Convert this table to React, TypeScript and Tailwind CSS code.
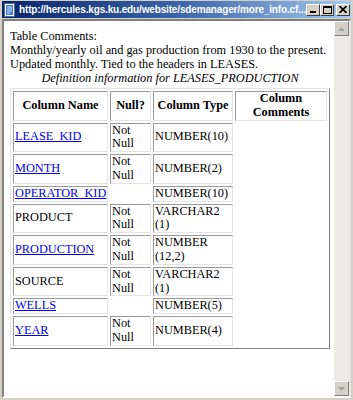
import React from "react";

const rows = [
  { name: "LEASE_KID", link: true, nul: ["Not", "Null"], type: ["NUMBER(10)"] },
  { name: "MONTH", link: true, nul: ["Not", "Null"], type: ["NUMBER(2)"] },
  { name: "OPERATOR_KID", link: true, nul: [], type: ["NUMBER(10)"] },
  { name: "PRODUCT", link: false, nul: ["Not", "Null"], type: ["VARCHAR2", "(1)"] },
  { name: "PRODUCTION", link: true, nul: ["Not", "Null"], type: ["NUMBER", "(12,2)"] },
  { name: "SOURCE", link: false, nul: ["Not", "Null"], type: ["VARCHAR2", "(1)"] },
  { name: "WELLS", link: true, nul: [], type: ["NUMBER(5)"] },
  { name: "YEAR", link: true, nul: ["Not", "Null"], type: ["NUMBER(4)"] },
];

const cell =
  "border border-t-[#9a9a9a] border-l-[#9a9a9a] border-b-[#e4e4e4] border-r-[#e4e4e4] px-[1px] align-middle";

const Lines = ({ lines }: { lines: string[] }) => (
  <>
    {lines.map((l, i) => (
      <React.Fragment key={l}>
        {i > 0 && <br />}
        {l}
      </React.Fragment>
    ))}
  </>
);

const WinButton = ({ children, className = "" }: { children: React.ReactNode; className?: string }) => (
  <div
    className={`flex h-[12px] w-[14px] items-center justify-center border border-t-white border-l-white border-b-[#404040] border-r-[#404040] bg-[#d4d0c8] ${className}`}
  >
    {children}
  </div>
);

const ScrollButton = ({ up }: { up?: boolean }) => (
  <div className="flex h-[15px] items-center justify-center border border-t-white border-l-white border-b-[#808080] border-r-[#808080] bg-[#d4d0c8]">
    <svg width="7" height="4" viewBox="0 0 7 4">
      <path d={up ? "M3.5 0 L7 4 L0 4 Z" : "M0 0 L7 0 L3.5 4 Z"} fill="#a0a0a0" />
    </svg>
  </div>
);

export default function App() {
  return (
    <div className="flex h-[400px] w-[353px] flex-col bg-[#d4d0c8] px-[2px] pb-[2px] pt-[1px] font-['Liberation_Serif',serif] text-black">
      {/* title bar */}
      <div className="flex h-[17px] shrink-0 items-center bg-linear-to-r from-[#0a246a] via-[#3a64a8] to-[#a6caf0] pl-[1px] pr-[1px]">
        <svg width="14" height="14" viewBox="0 0 14 14" className="shrink-0">
          <rect x="1.5" y="0.5" width="10" height="13" fill="#fff" stroke="#4a6a9a" />
          <rect x="3" y="2" width="7" height="10" fill="#3f7fd8" />
          <path d="M4 4 h5 M4 6 h5 M4 8 h5 M4 10 h3" stroke="#cfe2ff" strokeWidth="1" />
        </svg>
        <span className="ml-[2px] min-w-0 flex-1 whitespace-nowrap font-['Liberation_Sans',sans-serif] text-[10px] font-bold leading-[17px] tracking-[-0.15px] text-white">
          http://hercules.kgs.ku.edu/website/sdemanager/more_info.cf...
        </span>
        <div className="flex shrink-0 items-center">
          <WinButton>
            <div className="mt-[5px] h-[2px] w-[6px] bg-black" />
          </WinButton>
          <WinButton>
            <div className="h-[8px] w-[9px] border border-t-2 border-black" />
          </WinButton>
          <WinButton className="ml-[2px]">
            <svg width="8" height="7" viewBox="0 0 8 7">
              <path d="M0.5 0 L7.5 7 M7.5 0 L0.5 7" stroke="#000" strokeWidth="1.6" />
            </svg>
          </WinButton>
        </div>
      </div>

      {/* client area */}
      <div className="mt-[1px] flex min-h-0 flex-1 border-2 border-t-[#808080] border-l-[#808080] border-b-white border-r-[#e8e6e0]">
        <div className="min-w-0 flex-1 bg-white pl-[6px] pt-[8px] text-[12.3px] leading-[14px]">
          <div>
            Table Comments:
            <br />
            Monthly/yearly oil and gas production from 1930 to the present.
            <br />
            Updated monthly. Tied to the headers in LEASES.
          </div>
          <table className="w-[320px] table-fixed border-separate border-spacing-[2px] border border-t-[#e4e4e4] border-l-[#e4e4e4] border-b-[#808080] border-r-[#808080] text-[12.3px] leading-[13.8px]">
            <caption className="pb-[3px] leading-[14px] italic">Definition information for LEASES_PRODUCTION</caption>
            <colgroup>
              <col className="w-[95px]" />
              <col className="w-[41px]" />
              <col className="w-[80px]" />
              <col />
            </colgroup>
            <thead>
              <tr>
                <th className={`${cell} font-bold`}>Column Name</th>
                <th className={`${cell} font-bold`}>Null?</th>
                <th className={`${cell} font-bold`}>Column Type</th>
                <th className={`${cell} font-bold`}>
                  Column
                  <br />
                  Comments
                </th>
              </tr>
            </thead>
            <tbody>
              {rows.map((r) => (
                <tr key={r.name}>
                  <td className={cell}>
                    {r.link ? <a className="text-[#0000ee] underline">{r.name}</a> : r.name}
                  </td>
                  <td className={r.nul.length ? cell : "align-middle"}>
                    <Lines lines={r.nul} />
                  </td>
                  <td className={cell}>
                    <Lines lines={r.type} />
                  </td>
                  <td />
                </tr>
              ))}
            </tbody>
          </table>
        </div>

        {/* disabled scrollbar */}
        <div className="flex w-[15px] shrink-0 flex-col bg-[#ecebe6]">
          <ScrollButton up />
          <div className="flex-1" />
          <ScrollButton />
        </div>
      </div>
    </div>
  );
}
